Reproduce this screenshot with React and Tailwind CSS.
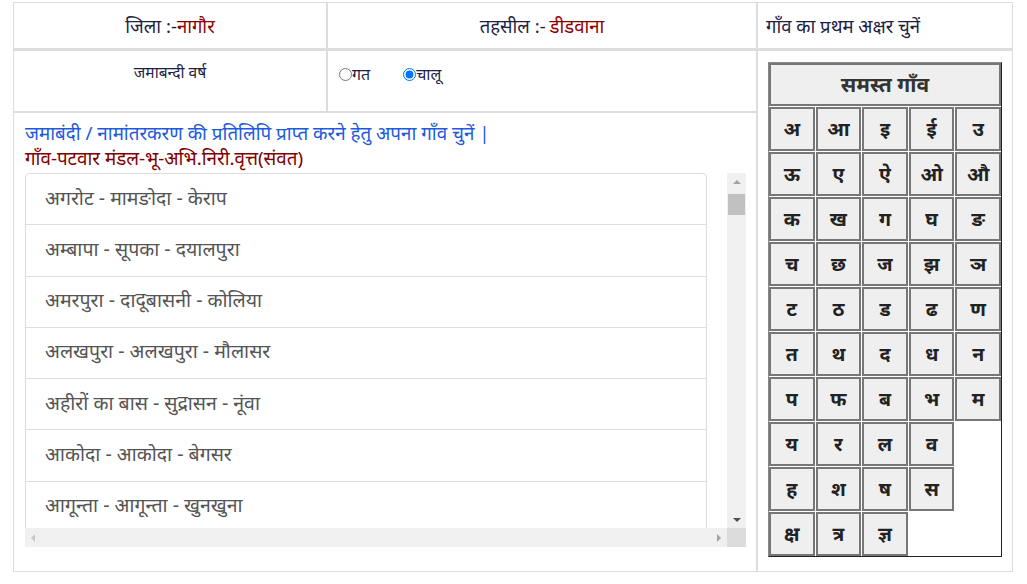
import { useState } from 'react'

const villages = [
  'अगरोट - मामङोदा - केराप',
  'अम्बापा - सूपका - दयालपुरा',
  'अमरपुरा - दादूबासनी - कोलिया',
  'अलखपुरा - अलखपुरा - मौलासर',
  'अहीरों का बास - सुद्रासन - नूंवा',
  'आकोदा - आकोदा - बेगसर',
  'आगून्ता - आगून्ता - खुनखुना',
]

const letters = [
  'अ', 'आ', 'इ', 'ई', 'उ',
  'ऊ', 'ए', 'ऐ', 'ओ', 'औ',
  'क', 'ख', 'ग', 'घ', 'ङ',
  'च', 'छ', 'ज', 'झ', 'ञ',
  'ट', 'ठ', 'ड', 'ढ', 'ण',
  'त', 'थ', 'द', 'ध', 'न',
  'प', 'फ', 'ब', 'भ', 'म',
  'य', 'र', 'ल', 'व', null,
  'ह', 'श', 'ष', 'स', null,
  'क्ष', 'त्र', 'ज्ञ', null, null,
]

export default function App() {
  const [year, setYear] = useState('current')

  return (
    <div className="bg-white min-h-[584px] pt-[2px] pl-[13px] text-[#1d2244]" style={{ fontFamily: '"Noto Sans", "Noto Sans Devanagari", "Liberation Sans", sans-serif' }}>
      <div className="w-[1000px] border border-[#ddd]">
        {/* Header row */}
        <div className="flex h-[48px] border-b-[3px] border-[#ddd] text-[18.5px]">
          <div className="w-[314px] border-r-2 border-[#ddd] flex items-center justify-center">
            जिला :-<span className="text-[#8b0000]">नागौर</span>
          </div>
          <div className="w-[430px] border-r-2 border-[#ddd] flex items-center justify-center">
            तहसील :- <span className="text-[#8b0000] ml-[4px]">डीडवाना</span>
          </div>
          <div className="flex-1 flex items-center pl-[8px]">गाँव का प्रथम अक्षर चुनें</div>
        </div>

        <div className="flex">
          <div className="w-[744px] border-r-2 border-[#ddd]">
            {/* Year row */}
            <div className="flex h-[62px] border-b-2 border-[#ddd]">
              <div className="w-[314px] border-r-2 border-[#ddd] text-center text-[15.5px] pt-[11px] leading-[20px]">
                जमाबन्दी वर्ष
              </div>
              <div className="flex-1 flex items-start pt-[13px] pl-[11px] text-[16px] leading-[20px]">
                <label className="flex items-center">
                  <input type="radio" name="year" className="m-0 w-[13px] h-[13px]" checked={year === 'past'} onChange={() => setYear('past')} />
                  <span>गत</span>
                </label>
                <label className="flex items-center ml-[33px]">
                  <input type="radio" name="year" className="m-0 w-[13px] h-[13px]" checked={year === 'current'} onChange={() => setYear('current')} />
                  <span>चालू</span>
                </label>
              </div>
            </div>

            {/* Village list */}
            <div className="h-[458px] pl-[11px] pt-[8px]">
              <p className="text-[18.8px] leading-[25px] text-[#1d5ae0]">
                जमाबंदी / नामांतरकरण की प्रतिलिपि प्राप्त करने हेतु अपना गाँव चुनें |
              </p>
              <p className="text-[18.8px] leading-[25px] text-[#800000]">गाँव-पटवार मंडल-भू-अभि.निरी.वृत्त(संवत)</p>

              <div className="mt-[2px] w-[721px]">
                <div className="flex">
                  <div className="w-[702px] h-[355px] overflow-hidden">
                    <ul className="w-[682px] border border-[#ddd] rounded-t-[4px]">
                      {villages.map((v) => (
                        <li key={v} className="h-[51.25px] border-b border-[#ddd] pl-[19px] pb-[4px] flex items-center text-[19.5px] text-[#555] cursor-pointer">
                          {v}
                        </li>
                      ))}
                    </ul>
                  </div>
                  {/* vertical scrollbar */}
                  <div className="w-[19px] h-[355px] bg-[#f0f0f0] flex flex-col items-center">
                    <div className="h-[17px] flex items-center justify-center">
                      <div className="w-0 h-0 border-l-[4px] border-r-[4px] border-b-[4px] border-l-transparent border-r-transparent border-b-[#a3a3a3]" />
                    </div>
                    <div className="w-[17px] h-[21px] bg-[#c1c1c1] mt-[4px]" />
                    <div className="flex-1" />
                    <div className="h-[17px] flex items-center justify-center">
                      <div className="w-0 h-0 border-l-[4px] border-r-[4px] border-t-[4px] border-l-transparent border-r-transparent border-t-[#505050]" />
                    </div>
                  </div>
                </div>
                {/* horizontal scrollbar */}
                <div className="flex h-[19px]">
                  <div className="w-[702px] bg-[#f0f0f0] flex items-center justify-between px-[6px]">
                    <div className="w-0 h-0 border-t-[4px] border-b-[4px] border-r-[4px] border-t-transparent border-b-transparent border-r-[#c8c8c8]" />
                    <div className="w-0 h-0 border-t-[4px] border-b-[4px] border-l-[4px] border-t-transparent border-b-transparent border-l-[#a3a3a3]" />
                  </div>
                  <div className="w-[19px] bg-[#dcdcdc]" />
                </div>
              </div>
            </div>
          </div>

          {/* Letter picker */}
          <div className="flex-1 pl-[10px] pt-[11px]">
            <div className="w-[234px] border border-t-[#888] border-l-[#888] border-r-[#222] border-b-[#222] bg-white">
              <div className="grid grid-cols-5 gap-[1px]">
                <button className="col-span-5 h-[43px] border-2 border-[#777] bg-[#efefef] text-[21px] font-bold text-[#333]">
                  समस्त गाँव
                </button>
                {letters.map((l, i) =>
                  l ? (
                    <button key={i} className="h-[44px] border-2 border-[#777] bg-[#efefef] text-[19.5px] font-bold text-[#222]">
                      {l}
                    </button>
                  ) : (
                    <div key={i} className="h-[44px]" />
                  )
                )}
              </div>
            </div>
          </div>
        </div>
      </div>
    </div>
  )
}
